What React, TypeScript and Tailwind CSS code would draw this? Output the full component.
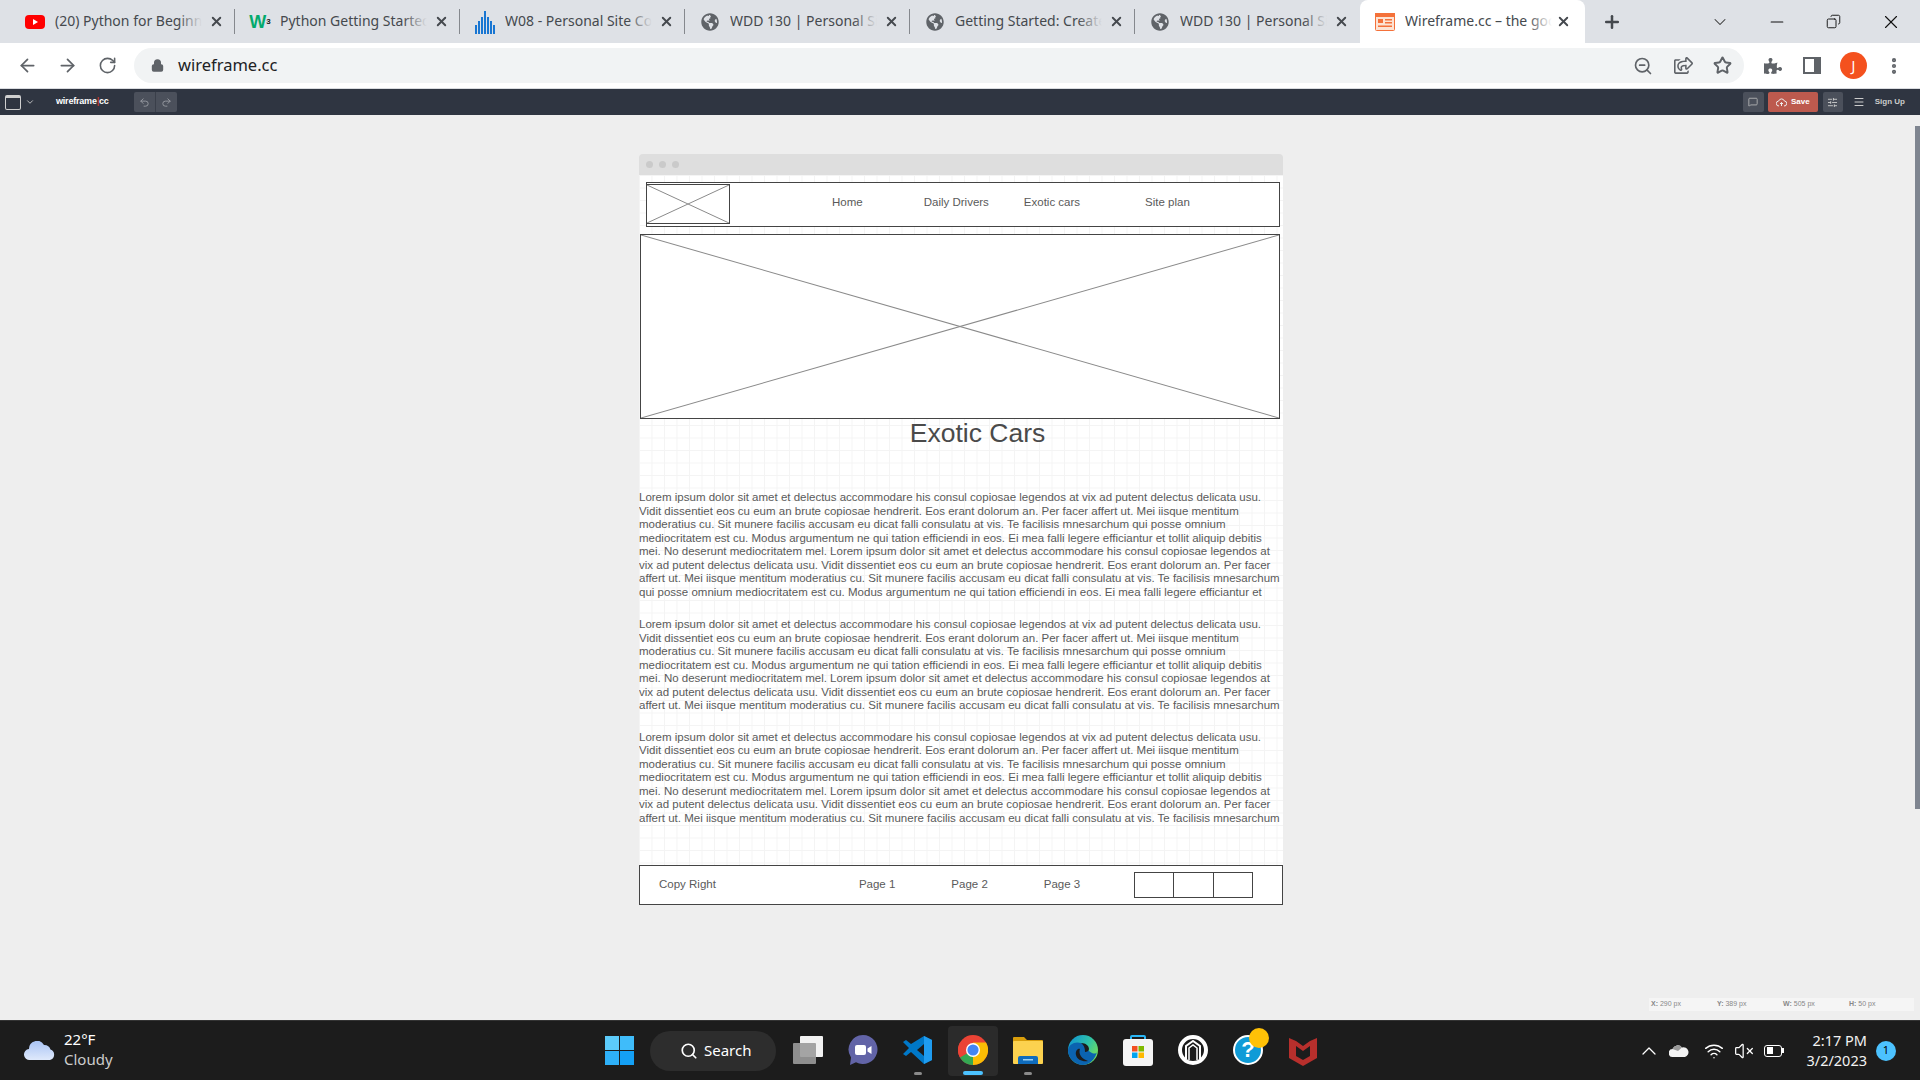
import { ArrowLeft, ArrowRight, ChevronDown, ChevronUp, Copy, Lock, MessageSquare, Minus, MoreVertical, Plus, RotateCw, Search, SlidersHorizontal, Star, Undo2, Redo2, Menu, VolumeX, Wifi, X, ZoomOut } from 'lucide-react'
import { FaGlobeAmericas, FaPuzzlePiece, FaRegShareSquare } from 'react-icons/fa'
import type { ReactNode } from 'react'

const LOREM_A =
  'Lorem ipsum dolor sit amet et delectus accommodare his consul copiosae legendos at vix ad putent delectus delicata usu. Vidit dissentiet eos cu eum an brute copiosae hendrerit. Eos erant dolorum an. Per facer affert ut. Mei iisque mentitum moderatius cu. Sit munere facilis accusam eu dicat falli consulatu at vis. Te facilisis mnesarchum qui posse omnium mediocritatem est cu. Modus argumentum ne qui tation efficiendi in eos. Ei mea falli legere efficiantur et tollit aliquip debitis mei. No deserunt mediocritatem mel. Lorem ipsum dolor sit amet et delectus accommodare his consul copiosae legendos at vix ad putent delectus delicata usu. Vidit dissentiet eos cu eum an brute copiosae hendrerit. Eos erant dolorum an. Per facer affert ut. Mei iisque mentitum moderatius cu. Sit munere facilis accusam eu dicat falli consulatu at vis. Te facilisis mnesarchum qui posse omnium mediocritatem est cu. Modus argumentum ne qui tation efficiendi in eos. Ei mea falli legere efficiantur et'

function YoutubeIcon() {
  return (
    <svg width="20" height="20" viewBox="0 0 20 20">
      <rect x="0" y="3" width="20" height="14" rx="4" fill="#f00" />
      <path d="M8 7l5 3-5 3z" fill="#fff" />
    </svg>
  )
}

function BarsIcon() {
  const bars = [9, 13, 17, 23, 17, 13, 9]
  return (
    <svg width="20" height="26" viewBox="0 0 20 26">
      {bars.map((h, i) => (
        <rect key={i} x={i * 3} y={25 - h} width="2" height={h} fill="#1976d2" />
      ))}
    </svg>
  )
}

function WireframeIcon() {
  return (
    <svg width="20" height="18" viewBox="0 0 20 18">
      <rect x="0.5" y="0.5" width="19" height="17" rx="1" fill="#fde3d3" stroke="#f4713a" />
      <rect x="0" y="0" width="20" height="4" fill="#f4713a" />
      <rect x="3" y="6" width="5" height="4" fill="#f4713a" />
      <rect x="10" y="6" width="7" height="1.5" fill="#f4713a" />
      <rect x="10" y="9" width="7" height="1.5" fill="#f4713a" />
      <rect x="3" y="12.5" width="14" height="1.5" fill="#f4713a" />
    </svg>
  )
}

function Tab({ icon, title, active, last }: { icon: ReactNode; title: string; active?: boolean; last?: boolean }) {
  return (
    <div className={`relative flex h-[43px] w-[225px] shrink-0 items-center pl-[15px] ${active ? 'rounded-t-[8px] bg-white' : ''}`}>
      <div className="flex w-[20px] shrink-0 items-center justify-center">{icon}</div>
      <div className="relative mb-[2px] ml-[10px] w-[147px] overflow-hidden whitespace-nowrap text-[14px] text-[#45494e]">
        {title}
        <div className={`absolute inset-y-0 right-0 w-[24px] bg-gradient-to-r from-transparent ${active ? 'to-white' : 'to-[#dee1e6]'}`} />
      </div>
      <X size={15} strokeWidth={3} className={`shrink-0 text-[#45494e] ${active ? 'ml-[4px]' : 'ml-[7px]'}`} />
      {!active && !last && <div className="absolute right-0 top-[9px] h-[25px] w-[1px] bg-[#85888d]" />}
    </div>
  )
}

function CrossBox({ className }: { className: string }) {
  return (
    <div className={`border-[1.5px] border-[#444] bg-white ${className}`}>
      <svg className="h-full w-full" viewBox="0 0 100 100" preserveAspectRatio="none">
        <line x1="0" y1="0" x2="100" y2="100" stroke="#8a8a8a" strokeWidth="1" vectorEffect="non-scaling-stroke" />
        <line x1="100" y1="0" x2="0" y2="100" stroke="#8a8a8a" strokeWidth="1" vectorEffect="non-scaling-stroke" />
      </svg>
    </div>
  )
}

function Paragraph({ className }: { className: string }) {
  return <p className={`w-[644px] overflow-hidden text-[11.5px] leading-[13.5px] text-[#5a5a5a] ${className}`}>{LOREM_A}</p>
}

function Chrome() {
  return (
    <svg width="30" height="30" viewBox="0 0 30 30">
      <circle cx="15" cy="15" r="15" fill="#ea4335" />
      <path d="M15 15L2 22.5A15 15 0 0 1 2 7.5z" fill="#ea4335" />
      <path d="M15 15L2 22.5A15 15 0 0 0 15 30z" fill="#34a853" />
      <path d="M15 15L15 30A15 15 0 0 0 28 7.5L15 7.5z" fill="#fbbc04" />
      <circle cx="15" cy="15" r="7" fill="#fff" />
      <circle cx="15" cy="15" r="5.6" fill="#4285f4" />
    </svg>
  )
}

function VsCode() {
  return (
    <svg width="30" height="30" viewBox="0 0 30 30">
      <path d="M21 1l8 4v20l-8 4-13-12-5 4-3-2 6-6-6-6 3-2 5 4z" fill="#0078c8" />
      <path d="M21 1l8 4v20l-8 4z" fill="#1f9cf0" />
      <path d="M21 9l-7 6 7 6z" fill="#1c1c1c" />
    </svg>
  )
}

function Files() {
  return (
    <svg width="30" height="30" viewBox="0 0 30 30">
      <path d="M0 3a1 1 0 0 1 1-1h10l3 3h15a1 1 0 0 1 1 1v4H0z" fill="#d99e0b" />
      <rect x="0" y="6" width="30" height="23" rx="1" fill="#fcd24f" />
      <path d="M5 29v-6a2 2 0 0 1 2-2h16a2 2 0 0 1 2 2v6z" fill="#0f6cbd" />
      <rect x="10" y="24" width="10" height="1.5" fill="#9bd0f5" />
    </svg>
  )
}

function Edge() {
  return (
    <svg width="30" height="30" viewBox="0 0 30 30">
      <defs>
        <linearGradient id="edge-a" x1="0" y1="0" x2="1" y2="0.6">
          <stop offset="0" stopColor="#0c8fd8" />
          <stop offset="0.6" stopColor="#2fc2a8" />
          <stop offset="1" stopColor="#6fdc60" />
        </linearGradient>
      </defs>
      <circle cx="15" cy="15" r="15" fill="url(#edge-a)" />
      <path d="M0 15C1 9 7 6 13 8c6 2 6 8 11 10 2 1 5 1 5-2-1 8-8 14-14 14C7 30 0 23 0 15z" fill="#0b63b0" />
      <path d="M12 14c-2 5 2 10 8 12-5 1-11-1-12-6-1-4 2-7 4-6z" fill="#1c1c1c" />
      <path d="M13 8c5 0 8 3 8 6 0 2-2 3-4 3 0-4-1-7-4-9z" fill="#1c1c1c" />
    </svg>
  )
}

function Store() {
  return (
    <svg width="30" height="32" viewBox="0 0 30 32">
      <path d="M8 6V3a1 1 0 0 1 1-1h12a1 1 0 0 1 1 1v3" fill="none" stroke="#29b6f6" strokeWidth="2" />
      <rect x="0" y="5" width="30" height="27" rx="3" fill="#f4f4f4" />
      <rect x="9" y="12" width="5.5" height="5.5" fill="#f25022" />
      <rect x="15.5" y="12" width="5.5" height="5.5" fill="#7fba00" />
      <rect x="9" y="18.5" width="5.5" height="5.5" fill="#00a4ef" />
      <rect x="15.5" y="18.5" width="5.5" height="5.5" fill="#ffb900" />
    </svg>
  )
}

function Teams() {
  return (
    <svg width="30" height="30" viewBox="0 0 30 30">
      <path d="M15 0a14.5 14.5 0 1 1-7 27.2L2 30l1-7.5A14.5 14.5 0 0 1 15 0z" fill="#6264a7" />
      <rect x="7" y="10" width="11" height="10" rx="2" fill="#fff" />
      <path d="M19.5 13.5l4-2.5v8l-4-2.5z" fill="#fff" />
    </svg>
  )
}

function Arch() {
  return (
    <svg width="30" height="30" viewBox="0 0 30 30">
      <circle cx="15" cy="15" r="13" fill="#1c1c1c" stroke="#fff" strokeWidth="4" />
      <path d="M8 24V11l7-5 7 5v13" fill="none" stroke="#fff" strokeWidth="2" />
      <path d="M11 25V13l4-3 4 3v12" fill="none" stroke="#fff" strokeWidth="1.5" />
    </svg>
  )
}

function Help() {
  return (
    <div className="relative h-[30px] w-[30px]">
      <div className="flex h-[30px] w-[30px] items-center justify-center rounded-full border-[2px] border-white bg-[#0f9bd7] font-['Liberation_Sans',sans-serif] text-[22px] font-bold text-white">?</div>
      <div className="absolute left-[16px] top-[-7px] h-[20px] w-[20px] rounded-full bg-[#ffc107]" />
    </div>
  )
}

function McAfee() {
  return (
    <svg width="28" height="32" viewBox="0 0 28 32">
      <path d="M0 4l7 3 7 5 7-5 7-3v20l-14 8-14-8z" fill="#b72f2c" />
      <path d="M7 12l7 5 7-5v10l-7 4-7-4z" fill="#1c1c1c" />
    </svg>
  )
}

function TaskItem({ children, dot, active }: { children: ReactNode; dot?: boolean; active?: boolean }) {
  return (
    <div className={`relative flex h-[50px] w-[50px] items-center justify-center rounded-[4px] pb-[2px] ${active ? 'bg-[#2b2b2b]' : ''}`}>
      {children}
      {dot && <div className="absolute bottom-[1px] h-[3px] w-[8px] rounded-full bg-[#8a8a8a]" />}
      {active && <div className="absolute bottom-[1px] h-[4px] w-[20px] rounded-full bg-[#4cc2ff]" />}
    </div>
  )
}

function WireframeBar() {
  return (
    <div className="flex h-[26px] items-center bg-[#2f3541] text-[#d5d5d5]">
      <div className="ml-[5px] h-[15px] w-[16px] rounded-[2px] border-[1.5px] border-t-[3px] border-[#cfcfcf]" />
      <ChevronDown size={10} className="ml-[4px]" />
      <span className="ml-[21px] font-['Liberation_Sans',sans-serif] text-[9px] font-bold tracking-[-0.2px] text-white">
        wireframe<span className="text-[#c0392b]">|</span>cc
      </span>
      <div className="ml-[25px] flex h-[20px] w-[43px] rounded-[2px] bg-[#4b505b] text-[#989ba2]">
        <div className="flex flex-1 items-center justify-center border-r border-[#3a3f4a]">
          <Undo2 size={11} />
        </div>
        <div className="flex flex-1 items-center justify-center">
          <Redo2 size={11} />
        </div>
      </div>
      <div className="ml-auto flex h-[20px] w-[21px] items-center justify-center rounded-[2px] bg-[#4b505b]">
        <MessageSquare size={10} className="text-[#bbb]" />
      </div>
      <div className="ml-[4px] flex h-[20px] w-[50px] items-center justify-center gap-[4px] rounded-[2px] bg-[#bd5a4e] font-['Liberation_Sans',sans-serif] text-[8px] font-bold text-white">
        <svg width="11" height="9" viewBox="0 0 11 9">
          <path d="M3 8a2.5 2.5 0 0 1-.3-5A3 3 0 0 1 8.400 3 2.500 2.500 0 0 1 8 8" fill="none" stroke="#eee" />
          <path d="M5.500 8V4.500M4 6l1.500-1.500L7 6" fill="none" stroke="#eee" />
        </svg>
        Save
      </div>
      <div className="ml-[5px] flex h-[20px] w-[20px] items-center justify-center rounded-[2px] bg-[#4b505b]">
        <SlidersHorizontal size={11} className="text-[#ccc]" />
      </div>
      <Menu size={12} className="ml-[10px] text-[#ccc]" />
      <span className="ml-[10px] mr-[15px] font-['Liberation_Sans',sans-serif] text-[8px] font-bold text-[#ccc]">Sign Up</span>
    </div>
  )
}

function WireframeCanvas() {
  return (
    <div className="ml-[639px] mt-[39px] w-[644px] font-['Liberation_Sans',sans-serif]">
      <div className="flex h-[21px] items-center gap-[6px] rounded-t-[4px] bg-[#dedede] pl-[7px]">
        <div className="h-[7px] w-[7px] rounded-full bg-[#cacaca]" />
        <div className="h-[7px] w-[7px] rounded-full bg-[#cacaca]" />
        <div className="h-[7px] w-[7px] rounded-full bg-[#cacaca]" />
      </div>
      <div className="bg-white bg-[linear-gradient(#f4f4f4_1px,transparent_1px),linear-gradient(90deg,#f4f4f4_1px,transparent_1px)] bg-[length:12.5px_12.5px] pt-[7px]">
        <div className="ml-[7px] flex h-[45px] w-[634px] items-start border-[1.5px] border-[#444] bg-white text-[11.5px] text-[#5a5a5a]">
          <CrossBox className="mt-[0.5px] h-[40px] w-[83px] shrink-0 border-l-0" />
          <span className="ml-[102px] mt-[11px]">Home</span>
          <span className="ml-[61px] mt-[11px]">Daily Drivers</span>
          <span className="ml-[35px] mt-[11px]">Exotic cars</span>
          <span className="ml-[65px] mt-[11px]">Site plan</span>
        </div>
        <CrossBox className="ml-[1px] mt-[7px] h-[185px] w-[640px]" />
        <h1 className="h-[29px] pl-[33px] text-center text-[26.5px] leading-[29px] text-[#4a4a4a]">Exotic Cars</h1>
        <Paragraph className="mt-[43px] h-[108px]" />
        <Paragraph className="mt-[19px] h-[94.5px]" />
        <Paragraph className="mt-[18px] h-[94.5px]" />
        <div className="mt-[40px] flex h-[40px] items-center border-[1.5px] border-[#444] bg-white text-[11.5px] text-[#5a5a5a]">
          <span className="mb-[1px] ml-[19px]">Copy Right</span>
          <span className="ml-[143px]">Page 1</span>
          <span className="ml-[56px]">Page 2</span>
          <span className="ml-[56px]">Page 3</span>
          <div className="ml-[54px] flex h-[26px] w-[119px] border-[1.5px] border-[#444]">
            <div className="w-[39px] border-r border-[#444]" />
            <div className="w-[40px] border-r-[1.5px] border-[#444]" />
          </div>
        </div>
      </div>
    </div>
  )
}

export default function App() {
  return (
    <div className="flex h-screen w-[1920px] flex-col overflow-hidden bg-[#eee] font-['Noto_Sans',sans-serif]">
      {/* browser tabs */}
      <div className="flex h-[43px] items-center bg-[#dee1e6] pl-[10px]">
        <Tab icon={<YoutubeIcon />} title="(20) Python for Beginners" />
        <Tab
          icon={
            <span className="font-['Liberation_Sans',sans-serif] text-[18px] font-bold leading-none text-[#04aa6d]">
              W<sup className="text-[8px] text-[#222]">3</sup>
            </span>
          }
          title="Python Getting Started"
        />
        <Tab icon={<BarsIcon />} title="W08 - Personal Site Code" />
        <Tab icon={<FaGlobeAmericas size={18} className="text-[#5f6368]" />} title="WDD 130 | Personal Site" />
        <Tab icon={<FaGlobeAmericas size={18} className="text-[#5f6368]" />} title="Getting Started: Create" />
        <Tab last icon={<FaGlobeAmericas size={18} className="text-[#5f6368]" />} title="WDD 130 | Personal Site" />
        <Tab active icon={<WireframeIcon />} title="Wireframe.cc – the good" />
        <Plus size={20} strokeWidth={3} className="ml-[17px] text-[#45494e]" />
        <ChevronDown size={20} strokeWidth={1.25} className="ml-[88px] text-[#333]" />
        <Minus size={20} strokeWidth={1.25} className="ml-[37px] text-[#111]" />
        <Copy size={15} strokeWidth={1.5} className="ml-[39px] -scale-x-100 text-[#111]" />
        <X size={22} strokeWidth={1.25} className="ml-[39px] text-[#111]" />
      </div>
      {/* address bar */}
      <div className="flex h-[46px] items-center border-b border-[#dadce0] bg-white text-[#5f6368]">
        <ArrowLeft size={21} className="ml-[17px]" />
        <ArrowRight size={21} className="ml-[19px]" />
        <RotateCw size={19} className="ml-[20px]" />
        <div className="ml-[17px] flex h-[35px] w-[1610px] items-center rounded-full bg-[#f1f3f4]">
          <Lock size={13} strokeWidth={3} fill="#5f6368" className="ml-[17px]" />
          <span className="ml-[14px] text-[16.5px] text-[#202124]">wireframe.cc</span>
          <ZoomOut size={20} className="ml-auto" />
          <FaRegShareSquare size={19} className="ml-[21px]" />
          <Star size={19} strokeWidth={2.5} className="ml-[20px] mr-[12px]" />
        </div>
        <FaPuzzlePiece size={18} className="ml-[20px]" />
        <div className="ml-[21px] flex h-[17px] w-[18px] justify-end border-[2.5px] border-[#5f6368] bg-white">
          <div className="h-full w-[5px] bg-[#5f6368]" />
        </div>
        <div className="ml-[19px] flex h-[27px] w-[27px] items-center justify-center rounded-full bg-[#f4511e] text-[14px] text-white">J</div>
        <MoreVertical size={20} strokeWidth={3} className="ml-[17px]" />
      </div>
      <WireframeBar />
      {/* editor page */}
      <div className="relative flex-1 overflow-hidden">
        <WireframeCanvas />
        <div className="absolute right-0 top-[11px] h-[683px] w-[5px] bg-[#7f8590]" />
        <div className="absolute left-[1649px] top-[883px] flex h-[13px] w-[265px] items-center bg-[#f5f5f5] pl-[2px] font-['Liberation_Sans',sans-serif] text-[7px] text-[#888]">
          <span className="w-[66px]"><b>X:</b> 290 px</span>
          <span className="w-[66px]"><b>Y:</b> 389 px</span>
          <span className="w-[66px]"><b>W:</b> 505 px</span>
          <span><b>H:</b> 50 px</span>
        </div>
      </div>
      {/* windows taskbar */}
      <div className="flex h-[60px] shrink-0 items-center border-t border-[#333] bg-[#1c1c1c] text-white">
        <svg width="32" height="20" viewBox="0 0 32 20" className="ml-[24px]">
          <defs>
            <linearGradient id="cloud" x1="0" y1="0" x2="0" y2="1">
              <stop offset="0" stopColor="#a9c4f5" />
              <stop offset="1" stopColor="#dfe9fb" />
            </linearGradient>
          </defs>
          <path d="M6 19a5.500 5.500 0 0 1-1-11A8 8 0 0 1 20 4a6.500 6.500 0 0 1 6.500 4.500A5.500 5.500 0 0 1 26 19z" fill="url(#cloud)" />
        </svg>
        <div className="mb-[3px] ml-[8px] w-[60px] text-[15px] leading-[20px]">
          <div>22°F</div>
          <div className="text-[#ccc]">Cloudy</div>
        </div>
        <div className="mb-[1px] ml-[481px] grid h-[29px] w-[29px] grid-cols-2 gap-[1px]">
          <div className="bg-[#5ccbfa]" />
          <div className="bg-[#3fbcfa]" />
          <div className="bg-[#2eb0f8]" />
          <div className="bg-[#14a0f5]" />
        </div>
        <div className="ml-[16px] flex h-[40px] w-[126px] items-center rounded-full bg-[#2d2d2d] pl-[30px] text-[15px]">
          <Search size={18} strokeWidth={2.25} />
          <span className="ml-[6px]">Search</span>
        </div>
        <div className="ml-[7px] flex items-center gap-[5px]">
          <TaskItem>
            <div className="relative h-[28px] w-[30px]">
              <div className="absolute right-0 top-0 h-[21px] w-[23px] rounded-[1px] bg-[#f2f2f2]" />
              <div className="absolute bottom-0 left-0 h-[21px] w-[23px] rounded-[1px] bg-[#9b9b9b]/90" />
            </div>
          </TaskItem>
          <TaskItem><Teams /></TaskItem>
          <TaskItem dot><VsCode /></TaskItem>
          <TaskItem active><Chrome /></TaskItem>
          <TaskItem dot><Files /></TaskItem>
          <TaskItem><Edge /></TaskItem>
          <TaskItem><Store /></TaskItem>
          <TaskItem><Arch /></TaskItem>
          <TaskItem><Help /></TaskItem>
          <TaskItem><McAfee /></TaskItem>
        </div>
        <ChevronUp size={24} strokeWidth={1.25} className="ml-[309px]" />
        <svg width="20" height="13" viewBox="0 0 20 13" className="ml-[8px]">
          <path d="M4 13a4 4 0 0 1-.5-8A5.500 5.500 0 0 1 13 3.500 4.500 4.500 0 0 1 16 13z" fill="#f2f2f2" />
          <path d="M3.500 5A5.500 5.500 0 0 1 13 3.500L9 7z" fill="#9a9a9a" />
        </svg>
        <Wifi size={20} strokeWidth={1.75} className="ml-[15px]" />
        <VolumeX size={20} strokeWidth={1.5} className="ml-[10px]" />
        <div className="ml-[10px] flex items-center">
          <div className="flex h-[12px] w-[18px] items-center rounded-[3px] border-[1.5px] border-white p-[1.5px]">
            <div className="h-full w-[6px] bg-white" />
          </div>
          <div className="h-[5px] w-[1.5px] bg-white" />
        </div>
        <div className="mb-[1px] ml-auto text-right text-[14.5px] leading-[20px] text-[#f2f2f2]">
          <div>2:17 PM</div>
          <div>3/2/2023</div>
        </div>
        <div className="ml-[9px] mr-[24px] flex h-[20px] w-[20px] items-center justify-center rounded-full bg-[#4cc2ff] text-[11px] text-black">1</div>
      </div>
    </div>
  )
}
